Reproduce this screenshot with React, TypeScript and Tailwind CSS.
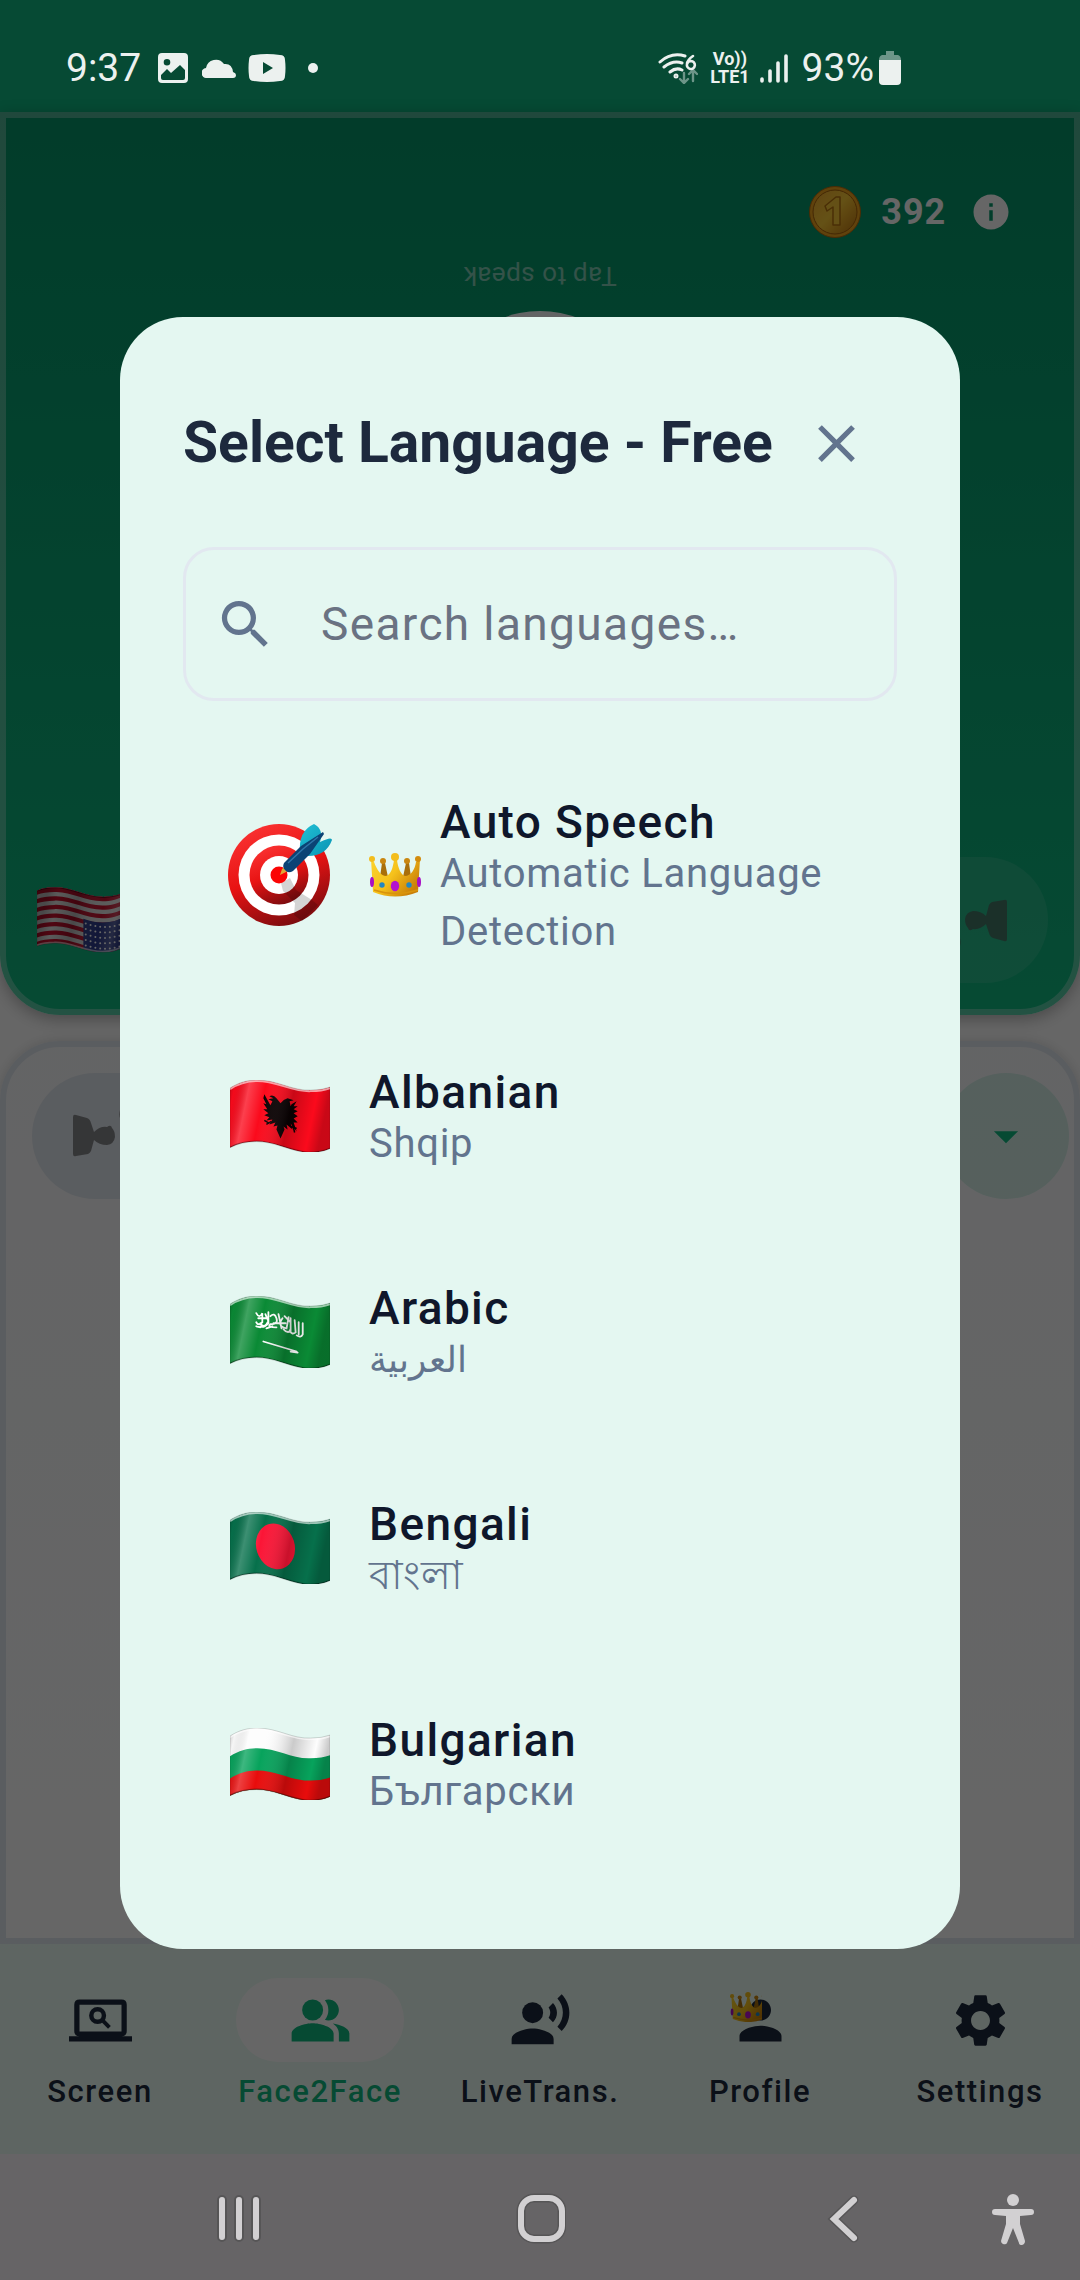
import type { ReactNode } from "react";
import {
  MdArrowDropDown,
  MdClose,
  MdInfo,
  MdPeopleAlt,
  MdPerson,
  MdRecordVoiceOver,
  MdSearch,
  MdSettings,
} from "react-icons/md";

type Country = "us" | "al" | "sa" | "bd" | "bg";

const FLAG_SHAPE =
  "M0 8C9 2 18 0 27 0C47 0 62 11 80 10Q91 10 99 7V68Q90 72 78 72C60 71 45 61 26 61Q12 61 0 67Z";

// everything below the top edge of the flag, shifted down by d
const wave = (d: number) =>
  `M0 ${8 + d}C9 ${2 + d} 18 ${d} 27 ${d}C47 ${d} 62 ${11 + d} 80 ${10 + d}Q91 ${10 + d} 99 ${7 + d}V90H0Z`;

const flagArt: Record<Country, ReactNode> = {
  us: (
    <>
      <path d={FLAG_SHAPE} fill="#f4f4f4" />
      {Array.from({ length: 13 }, (_, i) => (
        <path key={i} d={wave(i * 4.7)} fill={i % 2 ? "#e4e4e4" : "#c8102e"} />
      ))}
      <path d="M0 8C9 2 18 0 27 0Q38 0 48 4V37Q38 33 27 33Q12 33 0 41Z" fill="#2c3a8c" />
      {Array.from({ length: 45 }, (_, i) => (
        <circle key={i} cx={3 + (i % 9) * 5.3} cy={8 + Math.floor(i / 9) * 6 - Math.sin((i % 9) / 2.6) * 4} r="1.1" fill="#fff" />
      ))}
    </>
  ),
  al: (
    <>
      <path d={FLAG_SHAPE} fill="#fb0a1c" />
      <path
        d="M50 23L46 18Q43 14 39 16L43 18L38 19L42 21L40 25L34 14L33 18L36 24L33 23L37 29L33 29L38 33L34 35L39 37L36 40L42 39L39 44L45 42L43 46L47 45L46 49L50 58L54 49L53 46L57 49L56 44L62 49L60 43L66 51L63 42L67 42L63 38L67 36L63 33L67 31L63 29L67 26L63 26L66 21L61 24L60 26L59 21L63 20L57 18Q53 19 50 23Z"
        fill="#0a0203"
      />
      <path d="M34 40L39 43M36 44L41 41M60 46L66 48M62 44L64 52" stroke="#0a0203" strokeWidth="1.5" />
    </>
  ),
  sa: (
    <>
      <path d={FLAG_SHAPE} fill="#0a8a35" />
      <g fill="none" stroke="#fff" strokeLinecap="round">
        <path
          d="M26 17q3 6 6 0v9q-4 4-6 0M30 27q4 6 8-2l-3-7M38 16v11q-5 5-8 3M40 20q4-4 6 2t-6 6q-4 3 6 3M48 18l3 14M52 22q-6 8 4 10l2-11M54 20l6 6M60 22v13q-4 2-7-2M64 24l1 12q-4 3-6-2M68 26v12M72 27v11q-2 4-6 1M28 22h8M43 27h12M36 32l6-2M26 30l4 1"
          strokeWidth="1.8"
        />
        <path d="M33 45L66 55M60 55l7 1" strokeWidth="1.7" />
      </g>
    </>
  ),
  bd: (
    <>
      <path d={FLAG_SHAPE} fill="#06704b" />
      <ellipse cx="45" cy="34" rx="19" ry="23" transform="rotate(-18 45 34)" fill="#fb1536" />
    </>
  ),
  bg: (
    <>
      <path d={FLAG_SHAPE} fill="#fdfdfd" />
      <path d={wave(20)} fill="#07a35c" />
      <path d={wave(42)} fill="#e80c0c" />
    </>
  ),
};

function Flag({ country, className = "" }: { country: Country; className?: string }) {
  const clip = `clip-${country}`;
  const shade = `shade-${country}`;
  return (
    <svg viewBox="0 0 99 72" className={`shrink-0 ${className}`} aria-hidden="true">
      <defs>
        <clipPath id={clip}>
          <path d={FLAG_SHAPE} />
        </clipPath>
        <linearGradient id={shade} x1="0" x2="1" y1="0" y2="0.15">
          <stop offset="0" stopColor="#000" stopOpacity="0.22" />
          <stop offset="0.06" stopColor="#000" stopOpacity="0.03" />
          <stop offset="0.2" stopColor="#fff" stopOpacity="0.22" />
          <stop offset="0.36" stopColor="#fff" stopOpacity="0" />
          <stop offset="0.65" stopColor="#000" stopOpacity="0.2" />
          <stop offset="0.88" stopColor="#000" stopOpacity="0" />
          <stop offset="1" stopColor="#000" stopOpacity="0.2" />
        </linearGradient>
      </defs>
      <g clipPath={`url(#${clip})`}>
        {flagArt[country]}
        <path d={FLAG_SHAPE} fill={`url(#${shade})`} />
        <path d="M0 9C9 3 18 1 27 1C47 1 62 12 80 11Q91 11 99 8" fill="none" stroke="#fff" strokeOpacity="0.6" strokeWidth="2" />
        <path d="M99 68Q90 72 78 72C60 71 45 61 26 61Q12 61 0 67" fill="none" stroke="#000" strokeOpacity="0.35" strokeWidth="2" />
      </g>
      <path d={FLAG_SHAPE} fill="none" stroke="#000" strokeOpacity="0.25" strokeWidth="0.6" />
    </svg>
  );
}

function Target() {
  return (
    <svg viewBox="0 0 104 104" className="w-[104px] shrink-0" aria-hidden="true">
      <defs>
        <linearGradient id="target-red" x1="0.2" x2="0.6" y1="0" y2="1">
          <stop offset="0" stopColor="#fb3434" />
          <stop offset="0.5" stopColor="#e81313" />
          <stop offset="1" stopColor="#7c0c0f" />
        </linearGradient>
        <linearGradient id="dart-fin" x1="0" x2="1" y1="0" y2="1">
          <stop offset="0" stopColor="#22c1d6" />
          <stop offset="1" stopColor="#0893b3" />
        </linearGradient>
      </defs>
      <circle cx="51" cy="52" r="51" fill="url(#target-red)" />
      <circle cx="51" cy="52" r="40.5" fill="#fff" />
      <circle cx="51" cy="52" r="29.5" fill="url(#target-red)" />
      <circle cx="51" cy="52" r="19" fill="#fff" />
      <path d="M53 60L62 55L68 67L84 77L90 82L74 98L66 92L67 80L55 68Z" fill="#000" fillOpacity="0.17" />
      <circle cx="51" cy="52" r="8.5" fill="#fb0505" />
      <path d="M72 30Q70 8 86 1Q96 6 92 19Q104 13 104 17Q98 33 80 33Z" fill="url(#dart-fin)" />
      <path d="M52 52L54 46L58 43L61 46L58 49Z" fill="#e0a637" />
      <path d="M56 40L73 23L95 9L96 11L82 31L65 48Q60 51 57 47Q54 44 56 40Z" fill="#0b4375" />
      <path d="M60 40L75 26L90 14" stroke="#2e74a8" strokeWidth="1.5" fill="none" />
    </svg>
  );
}

function Crown({ className = "" }: { className?: string }) {
  return (
    <svg viewBox="0 0 52 44" className={`shrink-0 ${className}`} aria-hidden="true">
      <defs>
        <linearGradient id="crown-gold" x1="0" x2="1" y1="0" y2="0.6">
          <stop offset="0" stopColor="#fbd32c" />
          <stop offset="0.5" stopColor="#f6c21c" />
          <stop offset="1" stopColor="#c97f08" />
        </linearGradient>
      </defs>
      <path d="M13 10L11 24H19L16 10ZM37 10L34 24H42L40 10Z" fill="#a96f0a" />
      <circle cx="14" cy="8" r="3" fill="#c9860f" />
      <circle cx="38" cy="8" r="3" fill="#c9860f" />
      <path d="M2 6L5 9C8 17 12 23 17 23C22 22 24 14 25 7H28C29 15 32 22 36 23C42 23 46 16 47 9L51 6L49 39Q26 48 4 39Z" fill="url(#crown-gold)" />
      <circle cx="26" cy="4" r="4" fill="#f3bd1c" />
      <circle cx="3" cy="6" r="3" fill="#f3bd1c" />
      <circle cx="49" cy="6" r="3" fill="#d38c0d" />
      <path d="M5 37Q26 44 49 37" stroke="#d9940c" strokeWidth="1.5" fill="none" />
      <ellipse cx="3" cy="29" rx="2" ry="5" fill="#a80fc4" />
      <ellipse cx="50" cy="29" rx="2" ry="5" fill="#a80fc4" />
      <circle cx="13" cy="32" r="2.7" fill="#2287c2" />
      <circle cx="40" cy="32" r="2.7" fill="#2287c2" />
      <ellipse cx="26" cy="33" rx="4.2" ry="5.3" fill="#b413cf" />
    </svg>
  );
}

function Coin() {
  return (
    <svg viewBox="0 0 52 52" className="size-[52px]" aria-hidden="true">
      <defs>
        <linearGradient id="coin-gold" x1="0" x2="1" y1="0.1" y2="1">
          <stop offset="0" stopColor="#f3ac2e" />
          <stop offset="0.45" stopColor="#fbcb38" />
          <stop offset="0.6" stopColor="#eeb32a" />
          <stop offset="1" stopColor="#c07812" />
        </linearGradient>
      </defs>
      <circle cx="26" cy="26" r="25.5" fill="#f0a51e" stroke="#b96c0e" />
      <circle cx="26" cy="26" r="22" fill="url(#coin-gold)" stroke="#a8640c" />
      <path d="M16 20L27 11H31V39H24V21L18 25Z" fill="#fbc937" stroke="#b97410" strokeWidth="1.5" strokeLinejoin="round" />
    </svg>
  );
}

// two busts lying on their side, used by the swap buttons
function Busts({ className = "" }: { className?: string }) {
  return (
    <svg viewBox="0 0 64 56" className={`h-14 w-16 ${className}`} fill="#555" fillOpacity="0.65" aria-hidden="true">
      <path d="M0 9Q0 6 3 7L14 10Q17 11 18 15L21 24Q27 18 34 19Q38 16 39 20Q42 23 42 29Q41 36 34 37Q26 37 21 32L18 43Q17 45 15 46L3 48Q0 49 0 46Z" />
      <path d="M60 0Q66 2 64 12Q60 16 50 14Q45 10 47 2Q50 -2 60 0Z" />
    </svg>
  );
}

function LaptopSearch() {
  return (
    <svg viewBox="0 0 24 24" width="63" height="63" fill="currentColor" aria-hidden="true">
      <path fillRule="evenodd" d="M4 4H20Q22 4 22 6V16Q22 18 20 18H24V20H0V18H4Q2 18 2 16V6Q2 4 4 4ZM4 6V16.2H20V6Z" />
      <circle cx="10.9" cy="10.1" r="2.4" fill="none" stroke="currentColor" strokeWidth="1.7" />
      <path d="M12.6 11.8L15.4 14.6" stroke="currentColor" strokeWidth="1.5" />
    </svg>
  );
}

function StatusBar() {
  return (
    <header className="flex h-28 items-center justify-between bg-[#064a34] pt-6 pr-[179px] pl-[66px] text-[#ecf1ef]">
      <div className="flex items-center">
        <time className="text-[39px] leading-10">9:37</time>
        <svg viewBox="0 0 30 30" className="ml-[17px] size-[30px]" fill="currentColor" aria-hidden="true">
          <path
            fillRule="evenodd"
            d="M4 0H26Q30 0 30 4V26Q30 30 26 30H4Q0 30 0 26V4Q0 0 4 0ZM9 6a3.3 3.3 0 100 6.6A3.3 3.3 0 009 6ZM3 22V25Q3 27 5 27H25Q27 27 27 25V17L22 12L13 20L9 16Z"
          />
        </svg>
        <svg viewBox="0 0 34 20" className="ml-[14px] h-5 w-[34px]" fill="currentColor" aria-hidden="true">
          <path d="M5 20A5 5 0 014 10A10 10 0 0122 6Q30 5 31 14Q34 15 34 17Q34 20 31 20Z" />
        </svg>
        <svg viewBox="0 0 38 28" className="ml-3 h-7 w-[38px]" fill="currentColor" aria-hidden="true">
          <path fillRule="evenodd" d="M6 1Q19 -1 32 1Q37 1 37 6Q38 14 37 22Q37 27 32 27Q19 29 6 27Q1 27 1 22Q0 14 1 6Q1 1 6 1ZM15 8V20L25 14Z" />
        </svg>
        <span className="ml-[22px] size-[10px] rounded-full bg-current" />
      </div>
      <div className="flex items-center">
        <svg viewBox="0 0 40 32" className="h-8 w-10" fill="none" stroke="currentColor" strokeLinecap="round" aria-hidden="true">
          <path d="M2 10Q13 0 27 4M6 15Q15 8 24 11M12 20Q18 15 24 18" strokeWidth="3" />
          <circle cx="18" cy="24" r="1.5" strokeWidth="2" />
          <path d="M35 4Q29 8 29 12A4 4 0 1033 9Q30 9 29 12" strokeWidth="2.6" />
          <path d="M26 21V30M22 27L26 31L30 27M35 29V19M31 22L35 18L39 22" strokeWidth="2.4" strokeOpacity="0.45" />
        </svg>
        <div className="ml-3 flex flex-col items-center text-[18px] leading-[18px] font-bold">
          <span>Vo))</span>
          <span>LTE1</span>
        </div>
        <svg viewBox="0 0 28 30" className="ml-[10px] h-[30px] w-7" stroke="currentColor" strokeWidth="3.6" strokeLinecap="round" aria-hidden="true">
          <path d="M2 26V28M10 18V28M18 10V28M26 3V28" />
        </svg>
        <span className="ml-[14px] text-[39px] leading-10">93%</span>
        <svg viewBox="0 0 22 34" className="ml-[5px] h-[34px] w-[22px]" fill="currentColor" aria-hidden="true">
          <path d="M7 0H15V4H19Q22 5 22 9H0Q0 5 3 4H7Z" fillOpacity="0.45" />
          <path d="M0 9H22V30Q22 34 18 34H4Q0 34 0 30Z" />
        </svg>
      </div>
    </header>
  );
}

function SystemNav() {
  const icon = "h-[52px] w-[52px]";
  return (
    <footer className="grid h-[126px] grid-cols-[1fr_1fr_1fr_auto] items-center bg-[#666466] pt-1 pr-[46px] pl-[88px] text-[#d2d0d2]">
      <button type="button" aria-label="Recent apps" className="justify-self-center">
        <svg viewBox="0 0 52 52" className={icon} stroke="currentColor" strokeWidth="6" strokeLinecap="round" aria-hidden="true">
          <path d="M9 7V44M26 7V44M43 7V44" stroke="#000" strokeOpacity="0.15" strokeWidth="10" />
          <path d="M9 7V44M26 7V44M43 7V44" />
        </svg>
      </button>
      <button type="button" aria-label="Home" className="justify-self-center">
        <svg viewBox="0 0 52 52" className={icon} fill="none" stroke="currentColor" aria-hidden="true">
          <rect x="7" y="5" width="41" height="41" rx="13" stroke="#000" strokeOpacity="0.15" strokeWidth="9" />
          <rect x="7" y="5" width="41" height="41" rx="13" strokeWidth="6" />
        </svg>
      </button>
      <button type="button" aria-label="Back" className="justify-self-center">
        <svg viewBox="0 0 52 52" className={icon} fill="none" stroke="currentColor" strokeLinecap="round" aria-hidden="true">
          <path d="M39 7L19 26L39 45" stroke="#000" strokeOpacity="0.15" strokeWidth="9" />
          <path d="M39 7L19 26L39 45" strokeWidth="6" />
        </svg>
      </button>
      <button type="button" aria-label="Accessibility">
        <svg viewBox="5 0 42 52" className="h-[52px] w-[42px]" fill="currentColor" aria-hidden="true">
          <circle cx="26" cy="7" r="6" />
          <path d="M8 16H44Q47 16 47 19Q47 22 44 22L33 23V31L38 48Q38 51 35 52Q32 52 32 50L26 35L20 50Q19 52 16 51Q14 50 14 48L19 31V23L8 22Q5 22 5 19Q5 16 8 16Z" />
        </svg>
      </button>
    </footer>
  );
}

const tabs = [
  { label: "Screen", icon: <LaptopSearch /> },
  { label: "Face2Face", icon: <MdPeopleAlt size={63} />, active: true },
  { label: "LiveTrans.", icon: <MdRecordVoiceOver size={63} /> },
  { label: "Profile", icon: <MdPerson size={63} />, premium: true },
  { label: "Settings", icon: <MdSettings size={63} /> },
];

function TabBar() {
  return (
    <nav className="grid grid-cols-5 gap-5 bg-[#ecfdf5] pt-[34px] pb-[42px]">
      {tabs.map((tab) => (
        <a
          key={tab.label}
          href="#"
          className={`flex flex-col items-center gap-[10px] text-[31px] leading-10 font-medium tracking-wider ${tab.active ? "text-[#10b981]" : "text-slate-800"}`}
        >
          <span className={`relative flex h-[84px] w-[168px] items-center justify-center rounded-full ${tab.active ? "bg-white" : ""}`}>
            {tab.icon}
            {tab.premium && (
              <span className="absolute top-[14px] left-[54px] w-8 overflow-hidden">
                <Crown className="w-9" />
              </span>
            )}
          </span>
          {tab.label}
        </a>
      ))}
    </nav>
  );
}

function Conversation() {
  return (
    <div className="grid flex-1 auto-rows-fr gap-[26px] bg-white">
      <section className="flex flex-col rounded-b-[60px] border-6 border-white/30 bg-linear-to-b from-[#059669] to-[#10b981] bg-origin-border pt-[68px] pb-[26px] text-white shadow-[0_4px_16px_rgba(0,0,0,0.3)]">
        <div className="flex items-center justify-end pr-[62px]">
          <Coin />
          <span className="ml-5 text-[36px] leading-[52px] font-bold tracking-wide">392</span>
          <MdInfo size={42} className="ml-6" />
        </div>
        <p className="mt-[22px] rotate-180 text-center text-[26px] leading-8 tracking-[0.018em] text-white/50">Tap to speak</p>
        <button type="button" aria-label="Speak" className="mt-[19px] size-[210px] self-center rounded-full bg-slate-50" />
        <div className="mt-auto flex items-center justify-between px-[26px]">
          <Flag country="us" className="ml-[5px] w-[90px] rotate-180" />
          <button type="button" aria-label="Swap speakers" className="flex h-[126px] w-[190px] items-center justify-end rounded-full bg-white/10 pr-[41px]">
            <Busts className="rotate-180" />
          </button>
        </div>
      </section>
      <section className="flex flex-col rounded-t-[60px] border-6 border-slate-200 bg-linear-to-b from-slate-50 to-white pt-[26px] shadow-[0_0_12px_rgba(0,0,0,0.15)]">
        <div className="flex items-center justify-between pr-[5px] pl-[26px]">
          <button type="button" aria-label="Swap speakers" className="flex h-[126px] w-[190px] items-center rounded-full bg-slate-200 pl-[41px]">
            <Busts />
          </button>
          <button type="button" aria-label="Change language" className="flex size-[126px] items-center justify-center rounded-full bg-[#10b981]/15 text-[#10b981]">
            <MdArrowDropDown size={58} />
          </button>
        </div>
      </section>
    </div>
  );
}

const languages: { name: string; native: string; flag?: Country; lang?: string }[] = [
  { name: "Auto Speech", native: "Automatic Language Detection" },
  { name: "Albanian", native: "Shqip", flag: "al", lang: "sq" },
  { name: "Arabic", native: "العربية", flag: "sa", lang: "ar" },
  { name: "Bengali", native: "বাংলা", flag: "bd", lang: "bn" },
  { name: "Bulgarian", native: "Български", flag: "bg", lang: "bg" },
];

function LanguageDialog() {
  return (
    <div role="dialog" aria-modal="true" aria-labelledby="dialog-title" className="flex w-full flex-col rounded-[63px] bg-[#e4f7f1] px-[63px] pt-[63px] pb-[72px]">
      <div className="flex h-[126px] items-center justify-between">
        <h1 id="dialog-title" className="text-[57px] leading-[72px] font-bold whitespace-nowrap text-slate-800">
          Select Language - Free
        </h1>
        <button type="button" aria-label="Close" className="mr-[29px] text-slate-500">
          <MdClose size={63} />
        </button>
      </div>
      <label className="mt-[41px] flex h-[154px] items-center rounded-[31px] border-3 border-slate-200 pr-6 pl-7">
        <MdSearch size={63} className="shrink-0 text-slate-500" />
        <input
          type="text"
          aria-label="Search languages"
          placeholder="Search languages…"
          className="ml-11 min-w-0 flex-1 bg-transparent text-[46px] leading-[64px] tracking-[0.03em] outline-none placeholder:text-gray-500"
        />
      </label>
      <ul className="mt-[46px]">
        {languages.map((l) => (
          <li key={l.name}>
            <button type="button" className="flex w-full items-center py-[52px] pl-[45px] text-left">
              <span className="flex h-[112px] w-[104px] shrink-0 items-center justify-center pb-[10px]">
                {l.flag ? <Flag country={l.flag} className="w-[100px]" /> : <Target />}
              </span>
              {!l.flag && (
                <span className="-mr-[18px] ml-[37px] pb-[10px]">
                  <Crown className="w-[52px]" />
                </span>
              )}
              <span className="ml-[37px] flex flex-col">
                <span className="text-[46px] leading-[46px] font-medium tracking-[0.03em] text-slate-900">{l.name}</span>
                <span
                  lang={l.lang}
                  className={`leading-[58px] text-slate-500 ${l.lang === "ar" ? "text-[36px]" : "text-[40px] tracking-[0.018em]"}`}
                >
                  {l.native}
                </span>
              </span>
            </button>
          </li>
        ))}
      </ul>
    </div>
  );
}

export default function App() {
  return (
    <div className="flex min-h-screen flex-col font-[Roboto,'Noto_Sans',sans-serif]">
      <StatusBar />
      <main className="relative flex flex-1 flex-col">
        <Conversation />
        <TabBar />
        <div className="absolute inset-0 flex items-center justify-center bg-black/60 px-[120px]">
          <LanguageDialog />
        </div>
      </main>
      <SystemNav />
    </div>
  );
}
